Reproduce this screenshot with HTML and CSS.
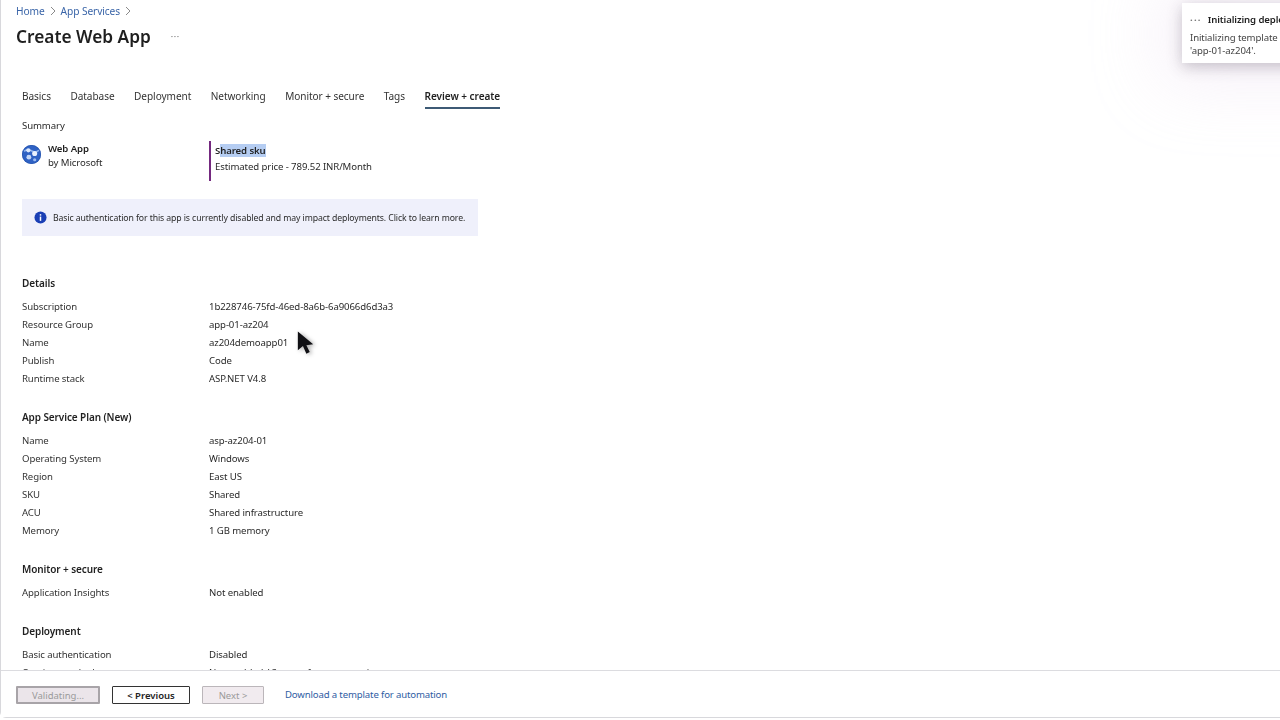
FILE: index.html
```html
<!DOCTYPE html>
<html lang="en">
<head>
<meta charset="utf-8">
<title>Create Web App</title>
<link rel="stylesheet" href="styles.css">
</head>
<body>
<div class="app">
  <header class="head">
    <nav class="crumbs">
      <a>Home</a>
      <svg class="chev" viewBox="0 0 8 10"><path d="M2 1l4 4-4 4"/></svg>
      <a>App Services</a>
      <svg class="chev" viewBox="0 0 8 10"><path d="M2 1l4 4-4 4"/></svg>
    </nav>
    <div class="title-row">
      <h1>Create Web App</h1>
      <span class="more">···</span>
    </div>
  </header>
  <nav class="tabs">
    <span class="tab">Basics</span>
    <span class="tab">Database</span>
    <span class="tab">Deployment</span>
    <span class="tab">Networking</span>
    <span class="tab">Monitor + secure</span>
    <span class="tab">Tags</span>
    <span class="tab active">Review + create</span>
  </nav>
  <main class="content">
    <div class="summary-label">Summary</div>
    <div class="product">
      <div class="product-id">
        <svg class="app-icon" viewBox="0 0 18 18">
          <circle cx="9" cy="9" r="9" fill="#2f62c4"/>
          <circle cx="9" cy="9" r="8.700" fill="none" stroke="#1f4fa8" stroke-width=".6"/>
          <path d="M2 6c3-3 6-1 8 0s4 1 6-1" stroke="#8fb2ea" stroke-width="1.6" fill="none"/>
          <circle cx="6" cy="5" r="2" fill="#dce8fb"/>
          <circle cx="12" cy="8" r="2.400" fill="#eaf1fd"/>
          <circle cx="6.500" cy="11.500" r="2.300" fill="#c3d6f6"/>
          <circle cx="12" cy="14" r="1.500" fill="#9dbcf0"/>
        </svg>
        <div>
          <div class="product-name">Web App</div>
          <div class="product-by">by Microsoft</div>
        </div>
      </div>
      <div class="sku">
        <div class="sku-name">S<span class="selected">hared sku</span></div>
        <div class="sku-price">Estimated price - 789.52 INR/Month</div>
      </div>
    </div>
    <div class="notice">
      <svg class="info" viewBox="0 0 14 14">
        <circle cx="7" cy="7" r="6.500" fill="#1a3fb5"/>
        <rect x="6.200" y="6" width="1.600" height="4.600" fill="#fff"/>
        <rect x="6.200" y="3.400" width="1.600" height="1.600" fill="#fff"/>
      </svg>
      <span>Basic authentication for this app is currently disabled and may impact deployments. Click to learn more.</span>
    </div>

    <section class="group first">
      <h2>Details</h2>
      <dl class="rows">
        <dt>Subscription</dt><dd>1b228746-75fd-46ed-8a6b-6a9066d6d3a3</dd>
        <dt>Resource Group</dt><dd>app-01-az204</dd>
        <dt>Name</dt><dd>az204demoapp01</dd>
        <dt>Publish</dt><dd>Code</dd>
        <dt>Runtime stack</dt><dd>ASP.NET V4.8</dd>
      </dl>
    </section>
    <section class="group">
      <h2>App Service Plan (New)</h2>
      <dl class="rows">
        <dt>Name</dt><dd>asp-az204-01</dd>
        <dt>Operating System</dt><dd>Windows</dd>
        <dt>Region</dt><dd>East US</dd>
        <dt>SKU</dt><dd>Shared</dd>
        <dt>ACU</dt><dd>Shared infrastructure</dd>
        <dt>Memory</dt><dd>1 GB memory</dd>
      </dl>
    </section>
    <section class="group">
      <h2>Monitor + secure</h2>
      <dl class="rows">
        <dt>Application Insights</dt><dd>Not enabled</dd>
      </dl>
    </section>
    <section class="group">
      <h2>Deployment</h2>
      <dl class="rows">
        <dt>Basic authentication</dt><dd>Disabled</dd>
        <dt>Continuous deployment</dt><dd>Not enabled / Set up after app creation</dd>
      </dl>
    </section>
  </main>
  <footer class="foot">
    <button class="btn validating" type="button">Validating...</button>
    <button class="btn primary" type="button">&lt; Previous</button>
    <button class="btn disabled" type="button">Next &gt;</button>
    <a class="template">Download a template for automation</a>
  </footer>
</div>

<aside class="toast">
  <div class="toast-title"><span class="dots">···</span><span>Initializing deployment...</span></div>
  <div class="toast-body">Initializing template deployment to resource group<br>'app-01-az204'.</div>
</aside>

<svg class="cursor" viewBox="0 0 20 30">
  <path d="M1 1v22l6-5 4 9 4-2-4-8 8-1z" fill="#101014"/>
</svg>
</body>
</html>
```
FILE: styles.css
```css
* { box-sizing: border-box; }
html, body { margin: 0; height: 100%; overflow: hidden; background: #fff; }
body {
  font-family: "Noto Sans", "Open Sans", "Liberation Sans", sans-serif;
  font-size: 9.6px;
  letter-spacing: -0.1px;
  color: #2a2a2a;
}
.app {
  height: 718px;
  display: flex;
  flex-direction: column;
  border-left: 1px solid #d8d8dc;
  border-bottom: 1px solid #d8d8dc;
  border-bottom-left-radius: 6px;
  filter: blur(.3px);
}
.head { padding: 4px 0 0 15px; flex: none; }
.crumbs { display: flex; align-items: center; height: 14px; gap: 4px; font-size: 10.2px; color: #3a65a8; }
.chev { width: 8px; height: 10px; }
.chev path { fill: none; stroke: #8a8a8a; stroke-width: 1; }
.title-row { display: flex; align-items: center; margin-top: 6px; height: 24px; }
h1 { margin: 0; font-size: 17.3px; font-weight: 600; letter-spacing: 0; color: #1f1f1f; }
.more { margin-left: 20px; color: #777; font-size: 9px; letter-spacing: .5px; }

.tabs { display: flex; gap: 19.5px; margin-top: 37px; padding-left: 21px; height: 28px; flex: none; }
.tab { height: 24px; line-height: 22px; font-size: 10.05px; letter-spacing: -0.05px; color: #333; }
.tab.active { font-weight: 600; color: #1f1f1f; border-bottom: 2px solid #3d5a75; }

.content { flex: 1; min-height: 0; overflow: hidden; padding: 5px 0 0 21px; }
.summary-label { line-height: 16px; }
.product { display: flex; margin-top: 7px; height: 40px; }
.product-id { width: 187px; display: flex; gap: 7px; padding-top: 1px; }
.app-icon { width: 19px; height: 19px; margin-top: 3px; }
.product-name { font-weight: 600; line-height: 14px; color: #1f1f1f; }
.product-by { line-height: 14px; }
.sku { border-left: 2px solid #74297f; padding: 2px 0 0 4px; }
.sku-name { font-weight: 600; line-height: 16px; color: #1f1f1f; }
.selected { background: #b5cdf2; }
.sku-price { line-height: 16px; }
.notice {
  margin-top: 18px;
  width: 456px;
  height: 37px;
  background: #eff0fb;
  display: flex;
  align-items: center;
  gap: 6px;
  padding-left: 12px;
  font-size: 8.7px;
  white-space: nowrap;
}
.info { width: 13px; height: 13px; flex: none; }

.group { margin-top: 20px; }
.group.first { margin-top: 38px; }
h2 { margin: 0; font-size: 10px; font-weight: 600; line-height: 18px; color: #1f1f1f; }
.rows { margin: 6px 0 0; display: grid; grid-template-columns: 187px 1fr; grid-auto-rows: 18px; line-height: 18px; }
dd { margin: 0; }
dt { color: #333; }

.foot {
  flex: none;
  height: 47px;
  border-top: 1px solid #dcdce0;
  display: flex;
  align-items: flex-start;
  padding: 15px 0 0 15px;
  gap: 12px;
  background: #fff;
}
.btn {
  height: 18px;
  padding: 0;
  font: inherit;
  font-size: 9.5px;
  letter-spacing: 0;
  background: #fff;
  border: 1px solid #333;
  border-radius: 1px;
  color: #222;
}
.validating { width: 84px; background: #ebe5ea; border: 2px solid #a8a4a8; color: #9a9a9a; }
.primary { width: 78px; font-weight: 600; }
.disabled { width: 62px; background: #f1ebef; border-color: #bbb6ba; color: #9a9a9a; }
.template { margin-left: 9px; line-height: 18px; color: #2f5da3; letter-spacing: -0.15px; }

.toast {
  position: absolute;
  top: 3px;
  left: 1182px;
  width: 260px;
  height: 60px;
  background: #fff;
  padding: 10px 8px;
  white-space: nowrap;
  box-shadow: 0 4px 14px rgba(60, 50, 70, .28), 0 0 70px 20px rgba(225, 205, 235, .28);
}
.toast-title { display: flex; gap: 6px; font-weight: 600; line-height: 14px; color: #1f1f1f; }
.dots { color: #777; letter-spacing: 1.2px; font-weight: 700; }
.toast-body { margin-top: 4px; line-height: 13px; color: #444; }

.cursor { position: absolute; left: 297px; top: 329px; width: 17px; height: 29px; filter: drop-shadow(2px 1px 2px rgba(0,0,0,.35)); }
```
